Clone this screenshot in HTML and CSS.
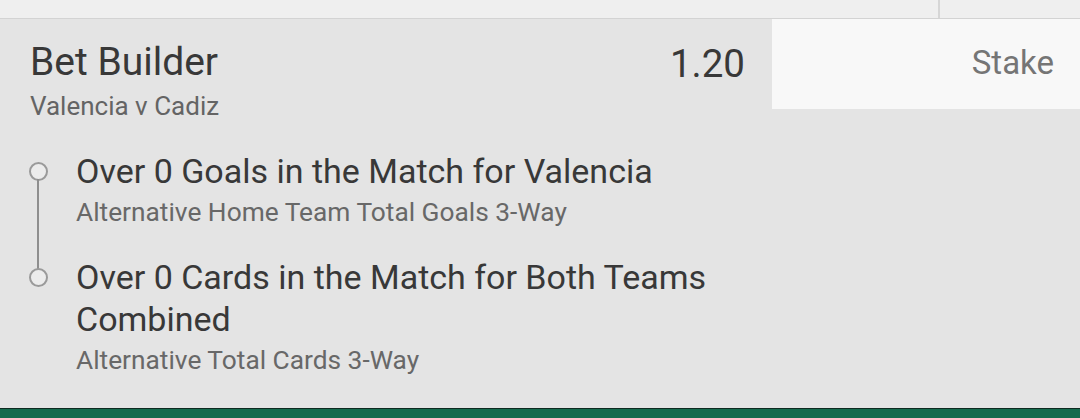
FILE: index.html
```html
<!DOCTYPE html>
<html lang="en">
<head>
<meta charset="utf-8">
<title>Bet Builder</title>
<link rel="stylesheet" href="styles.css">
</head>
<body>
<div class="page">
  <div class="topbar">
    <div class="topbar-left"></div>
    <div class="topbar-right"></div>
  </div>
  <div class="bet">
    <div class="bet-main">
      <div class="bet-head">
        <div class="bet-title-block">
          <div class="bet-title">Bet Builder</div>
          <div class="bet-event">Valencia v Cadiz</div>
        </div>
        <div class="bet-odds">1.20</div>
      </div>
      <ul class="legs">
        <li class="leg">
          <span class="leg-marker"></span>
          <div class="leg-text">
            <div class="leg-title">Over 0 Goals in the Match for Valencia</div>
            <div class="leg-market">Alternative Home Team Total Goals 3-Way</div>
          </div>
        </li>
        <li class="leg">
          <span class="leg-marker"></span>
          <div class="leg-text">
            <div class="leg-title">Over 0 Cards in the Match for Both Teams Combined</div>
            <div class="leg-market">Alternative Total Cards 3-Way</div>
          </div>
        </li>
      </ul>
    </div>
    <div class="stake">Stake</div>
  </div>
  <div class="footer"></div>
</div>
</body>
</html>
```

FILE: styles.css
```css
* { box-sizing: border-box; }
html, body { margin: 0; padding: 0; }
body {
  width: 1080px;
  height: 418px;
  overflow: hidden;
  background: #e4e4e4;
  font-family: Roboto, "Liberation Sans", Arial, sans-serif;
}
.page {
  display: flex;
  flex-direction: column;
  height: 418px;
}
.topbar {
  display: flex;
  height: 19px;
  background: #efefef;
  border-bottom: 1px solid #d3d3d3;
  flex: none;
}
.topbar-left {
  width: 940px;
  border-right: 2px solid #d6d6d6;
}
.topbar-right { flex: 1; }

.bet {
  flex: 1;
  display: flex;
  align-items: flex-start;
}
.bet-main {
  flex: 1;
  padding-right: 27px;
}
.bet-head {
  display: flex;
  justify-content: space-between;
  align-items: flex-start;
  padding-left: 30px;
  padding-top: 21px;
}
.bet-title {
  font-size: 39px;
  line-height: 44px;
  color: #383838;
}
.bet-event {
  margin-top: 7px;
  font-size: 26px;
  line-height: 30px;
  color: #646464;
}
.bet-odds {
  padding-top: 2px;
  font-size: 38.5px;
  line-height: 44px;
  color: #383838;
}
.stake {
  width: 308px;
  height: 90px;
  background: #f8f8f8;
  padding: 24px 26px 0 0;
  text-align: right;
  font-size: 33px;
  line-height: 40px;
  color: #757575;
}

.legs {
  list-style: none;
  margin: 29px 0 0 0;
  padding: 0 0 0 29px;
}
.leg {
  position: relative;
  display: flex;
  align-items: flex-start;
  gap: 28px;
}
.leg + .leg { margin-top: 28px; }
.leg:not(:last-child)::before {
  content: "";
  position: absolute;
  left: 8px;
  top: 29px;
  bottom: -41px;
  width: 2px;
  background: #8e8e8e;
}
.leg-marker {
  flex: none;
  width: 19px;
  height: 19px;
  margin-top: 12px;
  border: 2px solid #9a9a9a;
  border-radius: 50%;
  background: #ececec;
}
.leg-title {
  font-size: 34px;
  line-height: 42px;
  color: #383838;
}
.leg-market {
  margin-top: 4px;
  font-size: 26.3px;
  line-height: 32px;
  color: #686868;
}

.footer {
  flex: none;
  height: 10px;
  background: #156b4e;
  border-top: 1px solid #0d2a20;
}
```
